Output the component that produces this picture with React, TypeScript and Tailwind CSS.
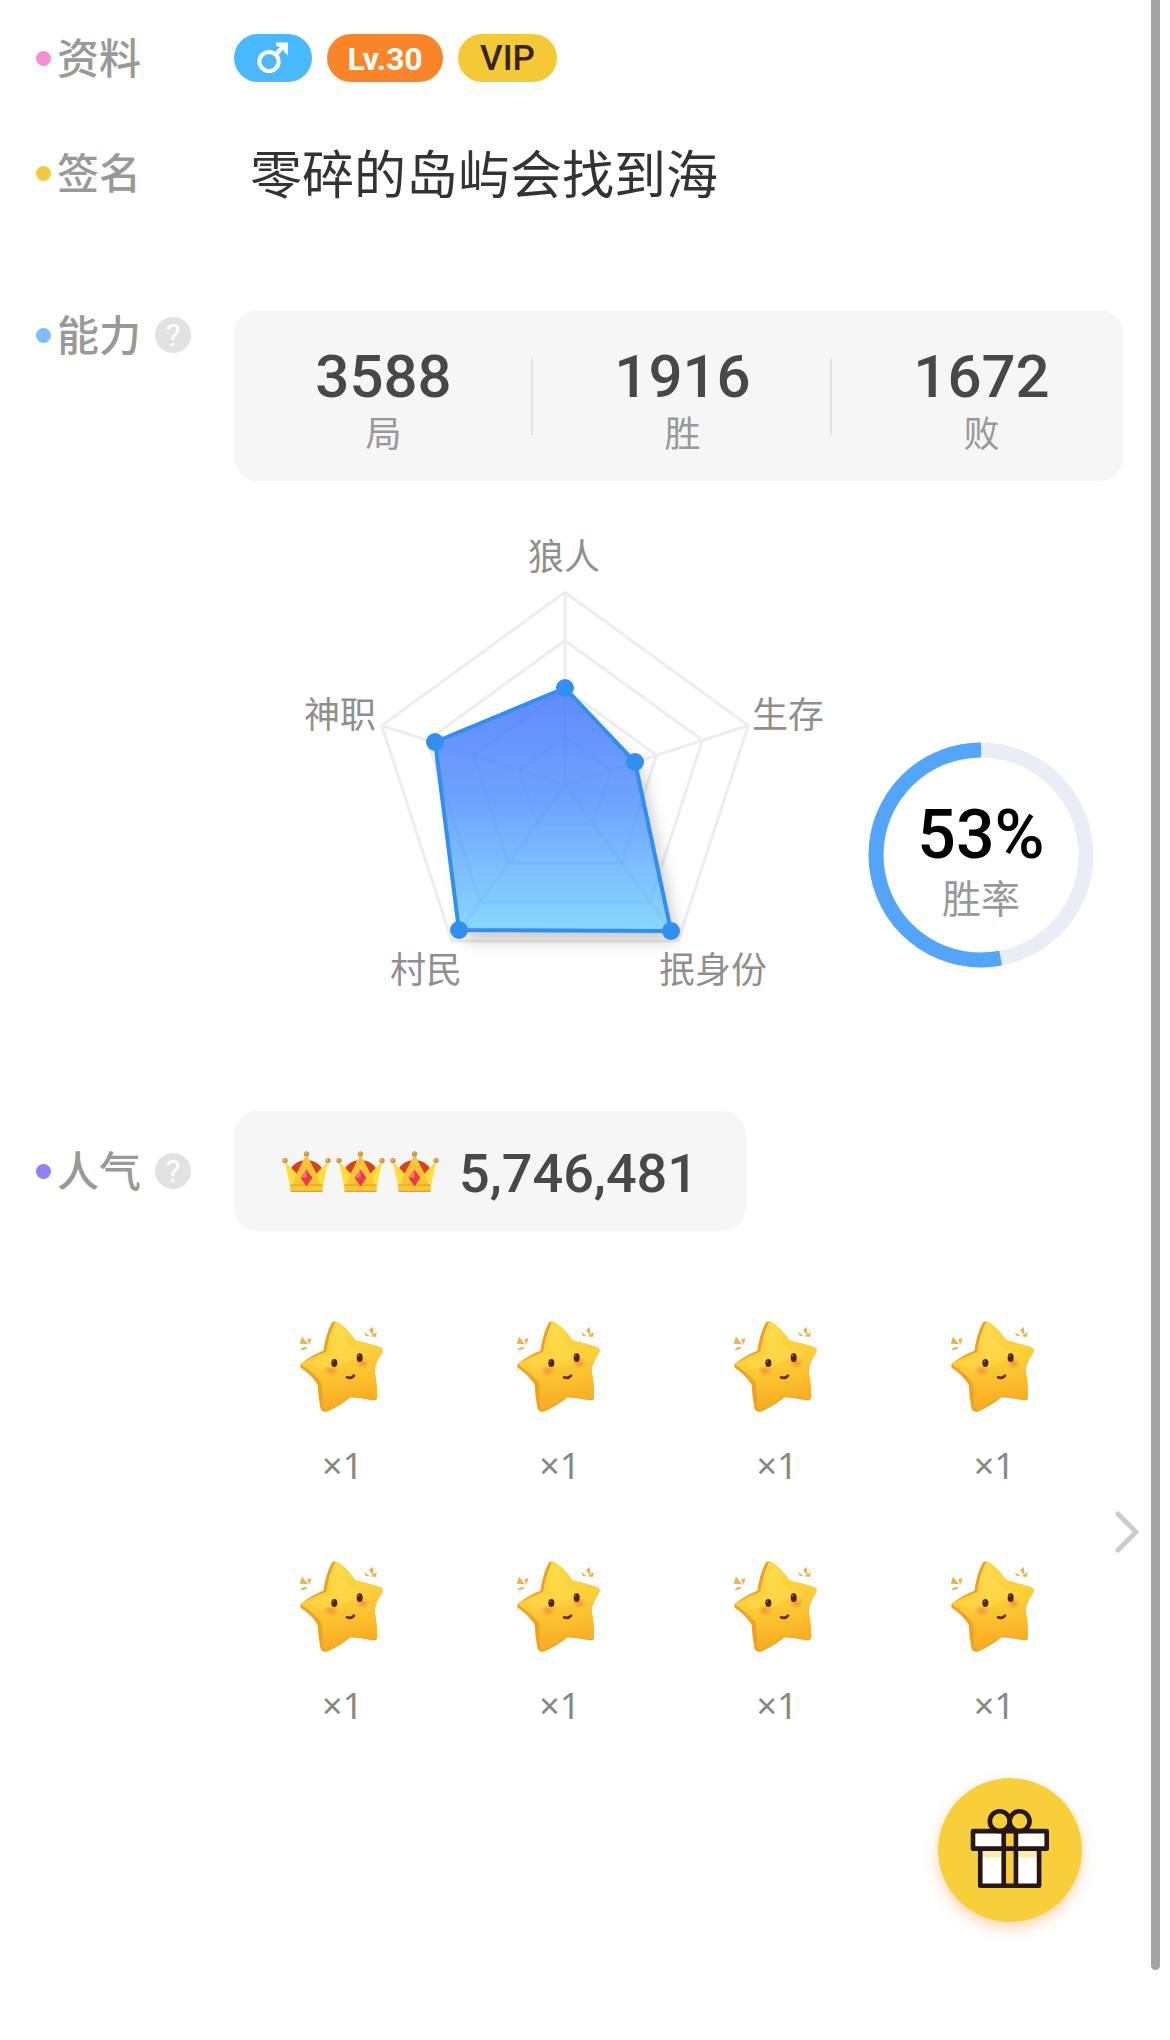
import type { ReactNode } from "react";

function HelpButton({ label }: { label: string }) {
  return (
    <button
      type="button"
      aria-label={label}
      className="ml-2 flex size-9 items-center justify-center rounded-full bg-[#e2e2e2] font-[Roboto,sans-serif] text-[32px] leading-9 text-white"
    >
      ?
    </button>
  );
}

function Section({
  title,
  dot,
  className,
  labelClass,
  help,
  children,
}: {
  title: string;
  dot: string;
  className: string;
  labelClass: string;
  help?: boolean;
  children: ReactNode;
}) {
  return (
    <section className={`flex ${className}`}>
      <div className={`flex w-[198px] shrink-0 items-center gap-1.5 ${labelClass}`}>
        <span className={`size-[15px] rounded-full ${dot}`} />
        <h2 className="pb-1 text-[42px] leading-[50px] font-medium text-[#999]">{title}</h2>
        {help && <HelpButton label={`${title}说明`} />}
      </div>
      {children}
    </section>
  );
}

function MaleIcon() {
  return (
    <svg viewBox="256 42 34 34" className="size-[34px]" role="img" aria-label="男">
      <circle cx="269" cy="62.5" r="9.6" fill="none" stroke="#fff" strokeWidth="4" />
      <path d="M275 56 283 48" stroke="#fff" strokeWidth="4.5" />
      <path d="M276 43.5H288V56.5L284 53 284 51 279 47.5 276 47Z" fill="#fff" />
    </svg>
  );
}

const stats = [
  { value: "3588", label: "局" },
  { value: "1916", label: "胜" },
  { value: "1672", label: "败" },
];

const AXES = [0, 72, 144, 216, 288].map((deg) => {
  const a = (deg * Math.PI) / 180;
  return [Math.sin(a), -Math.cos(a)];
});
const CX = 265;
const CY = 255;
const R = 192.7;

const ring = (k: number) =>
  AXES.map(([x, y]) => `${CX + x * R * k},${CY + y * R * k}`).join(" ");

const dataPoints = [
  [265, 158],
  [335, 232],
  [371, 401],
  [159, 400],
  [135, 212],
];

const radarLabels = [
  { text: "狼人", x: 264, y: 40 },
  { text: "生存", x: 488, y: 198 },
  { text: "抿身份", x: 413, y: 453 },
  { text: "村民", x: 126, y: 453 },
  { text: "神职", x: 40, y: 198 },
];

function RadarChart() {
  const shape = dataPoints.map((p) => p.join(",")).join(" ");
  return (
    <svg viewBox="0 0 530 470" className="h-[470px] w-[530px] shrink-0 overflow-visible">
      <defs>
        <linearGradient id="radarFill" x1="0" y1="0" x2="0" y2="1">
          <stop offset="0" stopColor="#5f8afd" />
          <stop offset="0.45" stopColor="#6ea2fe" />
          <stop offset="1" stopColor="#88d7ff" />
        </linearGradient>
        <filter id="radarShadow" x="-20%" y="-20%" width="140%" height="140%">
          <feGaussianBlur stdDeviation="8" />
        </filter>
      </defs>
      <g fill="none" stroke="#ededed" strokeWidth="3">
        {[0.25, 0.5, 0.75, 1].map((k) => (
          <polygon key={k} points={ring(k)} />
        ))}
        {AXES.map(([x, y]) => (
          <line key={x} x1={CX} y1={CY} x2={CX + x * R} y2={CY + y * R} />
        ))}
      </g>
      <polygon
        points="273,180 341,240 377,410 165,410 150,222"
        fill="#000"
        opacity="0.22"
        filter="url(#radarShadow)"
      />
      <polygon points={shape} fill="url(#radarFill)" />
      <clipPath id="radarClip">
        <polygon points={shape} />
      </clipPath>
      <g fill="none" stroke="#3c6fd0" strokeOpacity="0.06" strokeWidth="3" clipPath="url(#radarClip)">
        {[0.25, 0.5, 0.75].map((k) => (
          <polygon key={k} points={ring(k)} />
        ))}
        {AXES.map(([x, y]) => (
          <line key={x} x1={CX} y1={CY} x2={CX + x * R} y2={CY + y * R} />
        ))}
      </g>
      <polygon points={shape} fill="none" stroke="#318ff2" strokeWidth="4" strokeLinejoin="round" />
      {dataPoints.map(([x, y]) => (
        <circle key={x} cx={x} cy={y} r="9" fill="#318ff2" />
      ))}
      <g fill="#8f8f8f" fontSize="36" textAnchor="middle">
        {radarLabels.map((l) => (
          <text key={l.text} x={l.x} y={l.y}>
            {l.text}
          </text>
        ))}
      </g>
    </svg>
  );
}

function WinRate({ percent }: { percent: number }) {
  return (
    <div className="mt-[212px] grid size-[226px] shrink-0 place-items-center">
      <svg viewBox="0 0 226 226" className="col-start-1 row-start-1 size-full">
        <circle cx="113" cy="113" r="105" fill="none" stroke="#e9edf6" strokeWidth="15" />
        <circle
          cx="113"
          cy="113"
          r="105"
          fill="none"
          stroke="#53a5fb"
          strokeWidth="15"
          pathLength={100}
          strokeDasharray={`${percent} 100`}
          transform="translate(226 0) scale(-1 1) rotate(-90 113 113)"
        />
      </svg>
      <div className="col-start-1 row-start-1 flex flex-col items-center pt-3">
        <span className="font-[Roboto,sans-serif] text-[68px] leading-[70px] font-medium text-black">
          {percent}%
        </span>
        <span className="text-[39px] leading-[52px] text-[#999]">胜率</span>
      </div>
    </div>
  );
}

function Crown() {
  return (
    <svg viewBox="34 30 148 124" className="h-[41px] w-[49px]">
      <path d="M58 88Q72 58 108 58T158 88L150 112H66Z" fill="#d8401f" />
      <path d="M42 60 80 100 108 42 136 100 174 60 158 134H58Z" fill="#fbe037" />
      <path d="M108 40 74 106 66 132H150L142 106Z" fill="#fbc437" />
      <path d="M58 132H157V153H60Z" fill="#fbc62f" />
      <path d="M58 133H157M60 152H156" stroke="#dd9420" strokeWidth="3" />
      <path d="M108 86 126 111 108 137 90 111Z" fill="#e93a48" />
      <path d="M108 86V111H90Z" fill="#f5747c" />
      <g fill="#cf9440">
        <circle cx="43" cy="59" r="8" />
        <circle cx="108" cy="39" r="8" />
        <circle cx="173" cy="59" r="8" />
      </g>
      <g fill="#efc27c">
        <circle cx="41" cy="57" r="3" />
        <circle cx="106" cy="37" r="3" />
        <circle cx="171" cy="57" r="3" />
      </g>
    </svg>
  );
}

function StarGift() {
  return (
    <svg viewBox="54 58 270 282" className="h-[94px] w-[90px]">
      <defs>
        <linearGradient id="starBody" x1="0.35" y1="0" x2="0.5" y2="1">
          <stop offset="0" stopColor="#fddb45" />
          <stop offset="0.5" stopColor="#fccb35" />
          <stop offset="1" stopColor="#f9a91f" />
        </linearGradient>
        <linearGradient id="starSide" x1="0" y1="0" x2="0" y2="1">
          <stop offset="0" stopColor="#e8a12f" />
          <stop offset="1" stopColor="#f2a21e" />
        </linearGradient>
        <radialGradient id="starCheek">
          <stop offset="0" stopColor="#f58233" stopOpacity="0.8" />
          <stop offset="1" stopColor="#f58233" stopOpacity="0" />
        </radialGradient>
      </defs>
      <path
        d="M155 66Q165 58 178 68Q208 90 225 119Q262 128 302 140Q312 147 305 158Q286 187 284 210Q292 250 291 292Q290 300 278 299Q240 292 211 290Q178 318 140 333Q126 336 121 322Q114 285 113 252Q92 220 63 202Q57 193 66 186Q98 162 130 150Q137 100 155 66Z"
        fill="url(#starSide)"
      />
      <path
        d="M164 66Q171 62 180 69Q209 92 226 119Q262 128 302 140Q312 147 305 158Q286 187 284 210Q292 250 290 290Q288 297 278 296Q240 289 211 287Q178 313 141 328Q130 326 129 312Q129 278 125 246Q100 216 66 194Q64 188 70 185Q104 166 139 153Q145 105 164 66Z"
        fill="url(#starBody)"
      />
      <path d="M168 70Q158 110 154 160Q120 170 80 188Q120 200 140 222Q190 180 270 160Q220 150 205 130Q195 95 168 70Z" fill="#fee463" opacity="0.3" />
      <ellipse cx="152" cy="210" rx="25" ry="17" fill="url(#starCheek)" />
      <ellipse cx="247" cy="188" rx="21" ry="16" fill="url(#starCheek)" />
      <g fill="#4f2508">
        <ellipse cx="163" cy="187" rx="9" ry="12" />
        <ellipse cx="239" cy="171" rx="9" ry="13" />
      </g>
      <g fill="#fff" opacity="0.6">
        <circle cx="160" cy="182" r="2" />
        <circle cx="236" cy="165" r="2" />
      </g>
      <path d="M201 230Q214 235 222 225" fill="none" stroke="#6b2c0a" strokeWidth="8" strokeLinecap="round" />
      <g fill="#eeb04a">
        <path d="M66 108 84 131 59 129ZM95 113 87 133 82 115ZM61 148Q70 134 84 141Q74 150 61 148Z" />
        <path d="M252 93 269 107 257 106ZM278 78 281 105 267 89ZM291 94 287 109 272 107Z" />
      </g>
    </svg>
  );
}

function GiftIcon() {
  return (
    <svg viewBox="210 205 242 243" className="h-[81px] w-[80px]">
      <path d="M241 328H419V439H241Z" fill="#fff" />
      <path d="M241 328H419V354H241Z" fill="#fdeeb0" />
      <path d="M219 274H442V327H219Z" fill="#fff" />
      <path d="M311 274H350V439H311Z" fill="#f8cc3a" />
      <g fill="none" stroke="#231815" strokeWidth="14" strokeLinejoin="round">
        <path d="M219 274H442V327H219ZM241 327V439H419V327M312 274V439M349 274V439" />
        <circle cx="300" cy="244" r="30" />
        <circle cx="360" cy="244" r="30" />
      </g>
    </svg>
  );
}

export default function App() {
  return (
    <div className="flex bg-white pr-2.5 font-['Noto_Sans_CJK_SC',sans-serif]">
      <main className="flex min-w-0 flex-1 flex-col pt-[34px] pb-12 pl-9">
        <Section title="资料" dot="bg-[#f78fce]" className="items-center" labelClass="h-12">
          <div className="flex h-12 gap-[15px]">
            <span className="flex w-[78px] items-center justify-center rounded-full bg-[#48b8ff]">
              <MaleIcon />
            </span>
            <span className="flex w-[116px] items-center justify-center rounded-full bg-[#fa8428] pt-0.5 font-[Roboto,sans-serif] text-[32px] font-bold text-white">
              Lv.30
            </span>
            <span className="flex w-[99px] items-center justify-center rounded-full bg-[#f5c836] pt-0.5 font-[Roboto,sans-serif] text-[35px] font-medium text-[#33240c]">
              VIP
            </span>
          </div>
        </Section>

        <Section title="签名" dot="bg-[#f3c93f]" className="mt-16 items-center" labelClass="h-[52px]">
          <p className="pb-0.5 pl-4 text-[52px] leading-[52px] text-[#333]">零碎的岛屿会找到海</p>
        </Section>

        <Section title="能力" dot="bg-[#7dbdf9]" className="mt-[110px] mr-7" labelClass="h-[50px]" help>
          <div className="min-w-0 flex-1 rounded-3xl bg-[#f6f6f6] pt-8 pb-[30px]">
            <dl className="-mr-2 grid grid-cols-3">
              {stats.map((s, i) => (
                <div key={s.label} className="relative flex flex-col-reverse items-center">
                  <dt className="text-[36px] leading-[39px] text-[#999]">{s.label}</dt>
                  <dd className="font-[Roboto,sans-serif] text-[60px] leading-[70px] font-medium text-[#484848]">
                    {s.value}
                  </dd>
                  {i < 2 && <span className="absolute inset-y-4 right-0 w-[2px] bg-[#e2e2e2]" />}
                </div>
              ))}
            </dl>
          </div>
        </Section>

        <div className="mt-[49px] flex items-start gap-[38px] pl-[264px]">
          <RadarChart />
          <WinRate percent={53} />
        </div>

        <Section title="人气" dot="bg-[#937ff5]" className="mt-[111px] items-center" labelClass="h-[50px]" help>
          <div className="flex h-[120px] items-center rounded-3xl bg-[#f6f6f6] px-12">
            <div className="flex gap-[5px]">
              <Crown />
              <Crown />
              <Crown />
            </div>
            <span className="ml-5 pt-1.5 font-[Roboto,sans-serif] text-[54px] leading-[60px] font-medium text-[#484848]">
              5,746,481
            </span>
          </div>
        </Section>

        <div className="mt-[89px] flex items-center pl-[198px]">
          <ul className="grid flex-1 grid-cols-4 gap-y-[68px]">
            {Array.from({ length: 8 }, (_, i) => (
              <li key={i} className="flex flex-col items-center">
                <StarGift />
                <span className="mt-[26px] font-['Noto_Sans',sans-serif] text-[36px] leading-[52px] text-[#888]">
                  ×1
                </span>
              </li>
            ))}
          </ul>
          <button type="button" aria-label="更多礼物" className="flex w-12 justify-center pt-3">
            <svg viewBox="0 0 24 42" className="h-[42px] w-6" fill="none" stroke="#ccc" strokeWidth="5" strokeLinecap="round" strokeLinejoin="round">
              <path d="M3 3 21 21 3 39" />
            </svg>
          </button>
        </div>

        <button
          type="button"
          aria-label="送礼物"
          className="mt-[46px] mr-[69px] flex size-36 items-center justify-center self-end rounded-full bg-[#f8cf3b] pb-1 shadow-[0_6px_14px_rgba(250,150,60,0.4)]"
        >
          <GiftIcon />
        </button>
      </main>
      <div className="w-[9px] rounded-b-full bg-[#a3a3a3]" />
    </div>
  );
}
